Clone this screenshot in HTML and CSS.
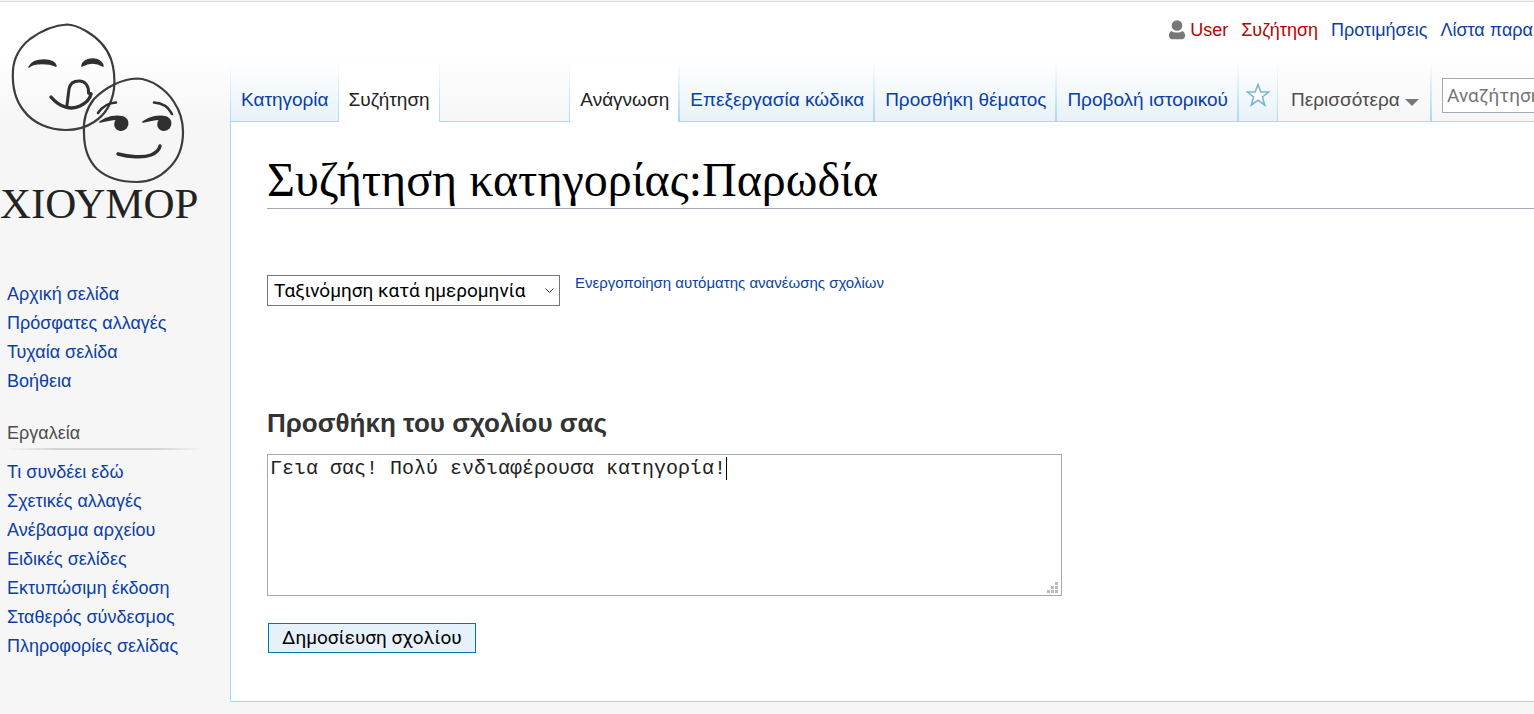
FILE: index.html
```html
<!DOCTYPE html>
<html lang="el">
<head>
<meta charset="utf-8">
<title>Συζήτηση κατηγορίας:Παρωδία</title>
<link rel="stylesheet" href="styles.css">
</head>
<body>
<div class="page">
  <aside class="sidebar">
    <a class="logo" href="#" aria-label="Αρχική σελίδα">
      <svg class="logo-faces" viewBox="0 0 200 184" fill="none" stroke="#303030" stroke-linecap="round" stroke-linejoin="round">
        <g stroke-width="2.200" stroke="#3c3c3c">
          <path d="M67 23.500C72 23.500 79 26 86 30C98 37 107 47 111 58C114 67 115 78 114 88C112 102 105 114 94 121C85 127 76 129 66 129C49 129 33 122 24 110C15 99 12 84 13 69C14 56 20 46 30 38C41 30 55 24 67 23.500Z"/>
          <path d="M137 77.500C151 78 166 88 174 101C180 110 183 119 183 131C183 145 178 159 168 168C159 177 149 181 137 181C122 181 107 177 97 168C88 159 84 146 84 132C83 119 86 108 94 98C105 87 121 78 137 77.500Z"/>
        </g>
        <path d="M51 96C60 107 72 109 80 105C86 102 90 98 91 93" stroke-width="3.400"/>
        <path d="M67 104L69 88C70 82 74 80 79 80C86 80 89 86 88.500 92L91 93" stroke-width="3"/>
        <path d="M98 112C102 106 108 102 116 101.500M154 101.500C163 102 169 107 172 113" stroke-width="2.600"/>
        <path d="M118 153C129 156 143 157 151 154C156 152 159 149 160 145" stroke-width="3.400"/>
        <g fill="#303030" stroke-width="1.600">
          <path d="M29 66C32 60 38 59 44 59C50 59 55 61 56 65C49 62 35 61 29 66Z"/>
          <path d="M82 65C83 60 88 58 93 58C98 58 102 61 103 65C96 61 89 61 82 65Z"/>
          <path d="M100 121C107 116 116 114 123 116C128 118 129 123 126 127C122 131 116 129 115 124C115 121 116 119 118 118C112 118 106 120 100 121Z"/>
          <path d="M143 121C150 116 159 114 166 116C171 118 172 123 169 127C165 131 159 129 158 124C158 121 159 119 161 118C155 118 149 120 143 121Z"/>
        </g>
      </svg>
      <span class="logo-text">ΧΙΟΥΜΟΡ</span>
    </a>
    <nav class="side-nav">
      <ul class="side-list">
        <li><a href="#">Αρχική σελίδα</a></li>
        <li><a href="#">Πρόσφατες αλλαγές</a></li>
        <li><a href="#">Τυχαία σελίδα</a></li>
        <li><a href="#">Βοήθεια</a></li>
      </ul>
      <h3 class="side-title">Εργαλεία</h3>
      <ul class="side-list">
        <li><a href="#">Τι συνδέει εδώ</a></li>
        <li><a href="#">Σχετικές αλλαγές</a></li>
        <li><a href="#">Ανέβασμα αρχείου</a></li>
        <li><a href="#">Ειδικές σελίδες</a></li>
        <li><a href="#">Εκτυπώσιμη έκδοση</a></li>
        <li><a href="#">Σταθερός σύνδεσμος</a></li>
        <li><a href="#">Πληροφορίες σελίδας</a></li>
      </ul>
    </nav>
  </aside>

  <div class="column">
    <header class="header">
      <nav class="personal">
        <svg class="user-icon" viewBox="0 0 16 20" fill="#777"><circle cx="8" cy="5.500" r="5.300"/><path d="M2.500 11C5 13 11 13 13.500 11C15 12 16 13 16 15V16C16 18.500 14 19.300 12 19.300H4C2 19.300 0 18.500 0 16V15C0 13 1 12 2.500 11Z"/></svg>
        <a class="new" href="#">User</a>
        <a class="new" href="#">Συζήτηση</a>
        <a href="#">Προτιμήσεις</a>
        <a href="#">Λίστα παρα</a>
      </nav>
      <div class="tabs">
        <a class="tab" href="#">Κατηγορία</a>
        <a class="tab active" href="#">Συζήτηση</a>
        <span class="tab-gap"></span>
        <a class="tab active" href="#">Ανάγνωση</a>
        <a class="tab" href="#">Επεξεργασία κώδικα</a>
        <a class="tab" href="#">Προσθήκη θέματος</a>
        <a class="tab" href="#">Προβολή ιστορικού</a>
        <a class="tab star" href="#" aria-label="Παρακολούθηση"><svg viewBox="0 0 24 24" fill="#fff" stroke="#7cb5d1" stroke-width="1.600"><path d="M12 1.500L14.800 9H22.600L16.400 14L18.700 22L12 17.300L5.300 22L7.600 14L1.400 9H9.200Z"/></svg></a>
        <button class="more" type="button">Περισσότερα <svg viewBox="0 0 14 7" fill="#777"><path d="M0 0H14L7 7Z"/></svg></button>
        <form class="search"><input type="search" aria-label="Αναζήτηση" placeholder="Αναζήτηση"></form>
      </div>
    </header>

    <main class="content">
      <h1 class="title">Συζήτηση κατηγορίας:Παρωδία</h1>
      <div class="sort">
        <select class="sort-select" aria-label="Ταξινόμηση"><option>Ταξινόμηση κατά ημερομηνία</option></select>
        <a class="refresh" href="#">Ενεργοποίηση αυτόματης ανανέωσης σχολίων</a>
      </div>
      <form class="comment">
        <label class="comment-label" for="comment">Προσθήκη του σχολίου σας</label>
        <div class="comment-box">
          <textarea id="comment" spellcheck="false">Γεια σας! Πολύ ενδιαφέρουσα κατηγορία!</textarea>
          <span class="caret"></span>
          <svg class="grip" viewBox="0 0 11 11" fill="#bbb"><path d="M8 0h3v3h-3zM4 4h3v3h-3zM8 4h3v3h-3zM0 8h3v3h-3zM4 8h3v3h-3zM8 8h3v3h-3z"/></svg>
        </div>
        <button class="submit" type="button">Δημοσίευση σχολίου</button>
      </form>
    </main>
  </div>
</div>
</body>
</html>
```
FILE: styles.css
```css
* { box-sizing: border-box; }
body {
  margin: 0;
  background: #f6f6f6;
  font-family: "Liberation Sans", Arial, sans-serif;
  font-size: 18px;
  color: #222;
  overflow-x: hidden;
}
a { color: #0b3fa5; text-decoration: none; }
a.new { color: #ba0000; }
.page {
  display: grid;
  grid-template-columns: 230px minmax(0, 1fr);
  min-height: 100vh;
  padding-bottom: 12px;
  border-top: 1px solid #f4f4f4;
  background: linear-gradient(#fff 50px, #f6f6f6 121px);
  box-shadow: inset 0 1px #ddd;
}
.logo { display: block; height: 229px; color: #222; }
.logo-faces { display: block; width: 200px; height: 184px; }
.logo-text {
  display: block;
  margin-top: -6px;
  font: 43px/50px "Liberation Serif", serif;
}
.side-nav { padding: 50px 26px 0 7px; }
.side-list { margin: 0; padding: 0; list-style: none; line-height: 29px; }
.side-title {
  margin: 23px 0 8px;
  font-size: 18px;
  font-weight: 400;
  line-height: 29px;
  color: #4d4d4d;
  border-bottom: 2px solid;
  border-image: linear-gradient(90deg, #f6f6f6, #d4d4d4 25%, #d4d4d4 75%, #f6f6f6) 1;
}

.column { display: flex; flex-direction: column; }
.header { display: flex; flex-direction: column; height: 121px; overflow: hidden; }
.personal {
  display: flex;
  align-items: center;
  justify-content: flex-end;
  gap: 13px;
  height: 60px;
  padding: 0 1px 2px 0;
  white-space: nowrap;
}
.user-icon { width: 16px; height: 20px; margin-right: -8px; }
.tabs {
  display: flex;
  height: 61px;
  font-size: 19px;
  line-height: 24px;
  white-space: nowrap;
  border-left: 1px solid;
  border-image: linear-gradient(#fff, #a7d7f9) 1;
}
.tab {
  flex: none;
  padding: 27px 9px 0 10px;
  border-right: 1px solid;
  border-bottom: 1px solid;
  border-image: linear-gradient(#fff, #a7d7f9) 1;
  background: linear-gradient(#fff, #e8f2f8);
}
.active { color: #222; background: #fff; border-bottom: 0; }
.tab-gap {
  flex: 1;
  border: solid;
  border-width: 0 1px 1px 0;
  border-image: linear-gradient(#fff, #a7d7f9) 1;
}
.tab-gap ~ .tab { border-right-width: 2px; }
.tab-gap ~ .star { padding: 22px 7px 0; border-right-width: 1px; }
.star svg { display: block; width: 24px; height: 24px; }
.more {
  flex: none;
  padding: 27px 11px 9px 13px;
  border: solid;
  border-width: 0 2px 1px 0;
  border-image: linear-gradient(#fff, #a7d7f9) 1;
  background: none;
  font: inherit;
  color: #4d4d4d;
}
.more svg { width: 14px; height: 7px; }
.search {
  flex: none;
  width: 102px;
  padding: 17px 0 0 10px;
  border-bottom: 1px solid #a7d7f9;
}
.search input {
  width: 160px;
  height: 35px;
  padding: 0 4px;
  border: 1px solid #a2a9b1;
  background: #fff;
  font: 19px Roboto, sans-serif;
}
.search input::placeholder { color: #757575; }

.content {
  flex: 1;
  padding: 32px 0 0 36px;
  border: solid #a7d7f9;
  border-width: 0 0 1px 1px;
  background: #fff;
}
.title {
  margin: 0;
  padding-bottom: 2px;
  font: 48px/52px "Liberation Serif", serif;
  color: #000;
  border-bottom: 1px solid #a2a9b1;
}
.sort { display: flex; gap: 15px; margin-top: 66px; }
.sort-select {
  appearance: none;
  width: 293px;
  height: 31px;
  padding: 0 6px;
  border: 1px solid #767676;
  border-radius: 0;
  color: #000;
  font: 19px Roboto, sans-serif;
  background: #fff url("data:image/svg+xml,%3Csvg xmlns='http://www.w3.org/2000/svg' width='9' height='6' fill='none' stroke='%23444'%3E%3Cpath d='M.5.5l4 4 4-4'/%3E%3C/svg%3E") no-repeat right 5px center;
}
.refresh { font-size: 15px; line-height: 16px; }
.comment { margin-top: 100px; }
.comment-label { display: block; font-size: 26px; font-weight: 700; line-height: 34px; color: #333; }
.comment-box { position: relative; width: 795px; max-width: 100%; margin-top: 14px; }
.comment-box textarea {
  display: block;
  width: 100%;
  height: 142px;
  padding: 2px;
  border: 1px solid #a2a9b1;
  border-radius: 0;
  resize: none;
  color: #222;
  font: 20px/23px "Liberation Mono", monospace;
}
.caret { position: absolute; left: 459px; top: 3px; width: 1px; height: 23px; background: #000; }
.grip { position: absolute; right: 4px; bottom: 3px; width: 11px; height: 11px; }
.submit {
  display: block;
  height: 30px;
  margin: 27px 0 0 1px;
  padding: 0 13px;
  border: 1px solid #0078a7;
  background: #e5f1fb;
  font: 19px/26px Roboto, sans-serif;
  color: #000;
}
```
